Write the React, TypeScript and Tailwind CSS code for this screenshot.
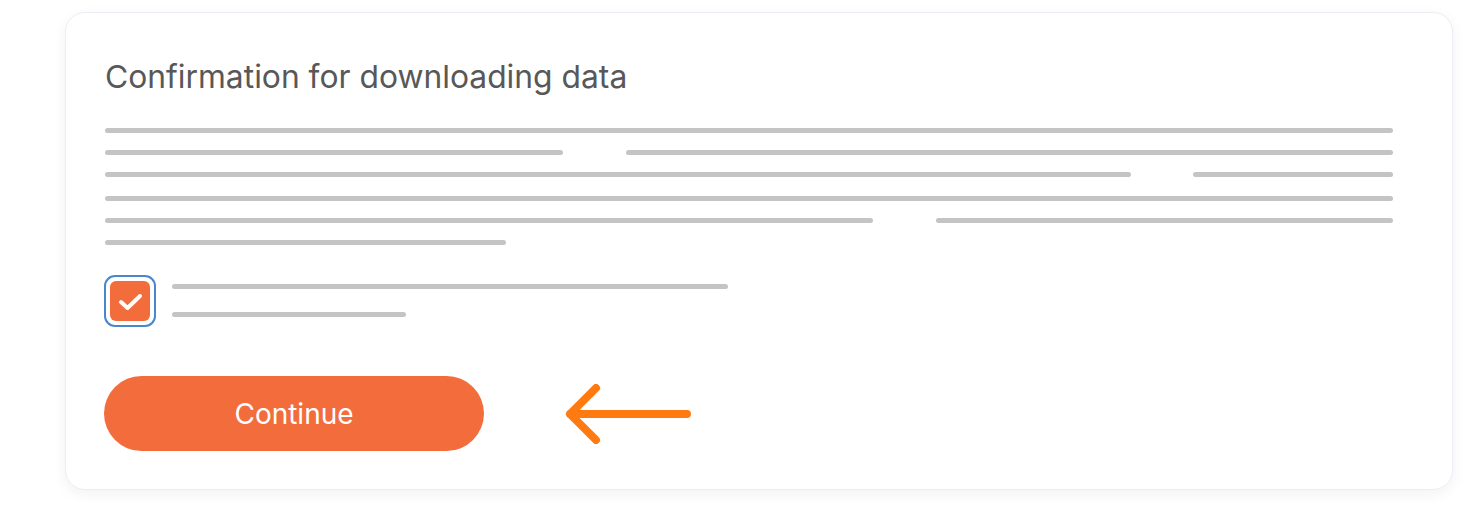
const bar = 'h-[5px] rounded-full bg-[#c4c4c4]'

function TextRow({ left, right }: { left: string; right?: string }) {
  return (
    <div className="flex w-full">
      <div className={`${bar} ${left}`} />
      {right && <div className={`${bar} ${right}`} />}
    </div>
  )
}

export default function App() {
  return (
    <div className="w-[1474px] h-[520px] bg-white pl-[65px] pt-[12px]" style={{ fontFamily: 'Inter, "Noto Sans", sans-serif' }}>
      <div className="w-[1388px] h-[478px] rounded-[20px] border border-[#eceef3] bg-white shadow-[0_4px_14px_rgba(30,40,80,0.06)] pl-[39px] pr-[59px] pt-[45px]">
        {/* Heading */}
        <h1 className="text-[31.8px] leading-[38px] text-[#585858] font-normal">
          Confirmation for downloading data
        </h1>

        {/* Placeholder paragraph */}
        <div className="mt-[32px] flex flex-col w-[1288px]">
          <TextRow left="w-full" />
          <div className="mt-[17px]">
            <TextRow left="w-[458px]" right="ml-[63px] flex-1" />
          </div>
          <div className="mt-[17px]">
            <TextRow left="w-[1026px]" right="ml-[62px] flex-1" />
          </div>
          <div className="mt-[19px]">
            <TextRow left="w-full" />
          </div>
          <div className="mt-[17px]">
            <TextRow left="w-[768px]" right="ml-[63px] flex-1" />
          </div>
          <div className="mt-[17px]">
            <TextRow left="w-[401px]" />
          </div>
        </div>

        {/* Consent checkbox */}
        <div className="mt-[30px] flex items-start">
          <div className="w-[52px] h-[52px] rounded-[11px] border-2 border-[#4a86cc] p-[4px] -ml-[1px]">
            <div className="w-full h-full rounded-[6px] bg-[#f26c3c] flex items-center justify-center">
              <svg width="26" height="26" viewBox="0 0 26 26" fill="none">
                <path
                  d="M4 14 L10.5 20 L23 8"
                  stroke="#ffffff"
                  strokeWidth="4"
                  strokeLinecap="round"
                  strokeLinejoin="round"
                />
              </svg>
            </div>
          </div>
          <div className="ml-[16px] pt-[9px] flex flex-col gap-[23px]">
            <div className={`${bar} w-[556px]`} />
            <div className={`${bar} w-[234px]`} />
          </div>
        </div>

        {/* Action */}
        <div className="mt-[49px] flex items-center">
          <button className="w-[380px] h-[75px] -ml-[1px] rounded-full bg-[#f26c3c] text-white text-[28px] leading-none">
            Continue
          </button>
          <svg className="ml-[79px]" width="134" height="60" viewBox="0 0 134 60" fill="none">
            <path
              d="M124 30 H7 M33 4 L7 30 L33 56"
              stroke="#ff7b12"
              strokeWidth="8"
              strokeLinecap="round"
              strokeLinejoin="round"
            />
          </svg>
        </div>
      </div>
    </div>
  )
}
